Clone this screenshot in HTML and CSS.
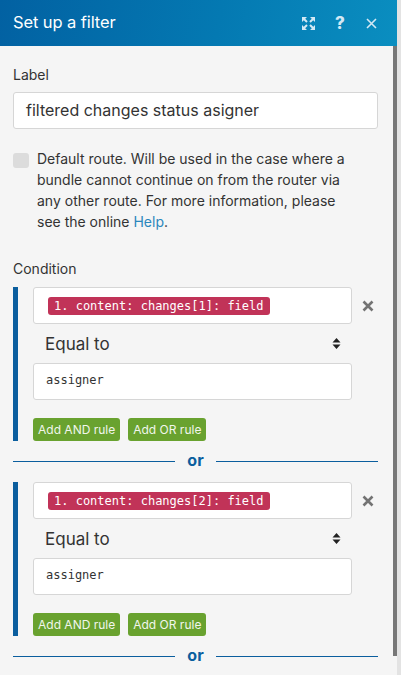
FILE: index.html
```html
<!DOCTYPE html>
<html>
<head>
<meta charset="utf-8">
<link rel="stylesheet" href="styles.css">
</head>
<body>
<div class="panel">
  <div class="header">
    <span class="title">Set up a filter</span>
    <div class="tools">
      <svg class="ico-expand" width="13" height="13" viewBox="0 0 13 13">
        <path d="M0 0H5L0 5Z M13 0H8L13 5Z M0 13H5L0 8Z M13 13H8L13 8Z" fill="currentColor"/>
        <path d="M2 2L5 5M11 2L8 5M2 11L5 8M11 11L8 8" stroke="currentColor" stroke-width="2"/>
      </svg>
      <span class="ico-help">?</span>
      <svg class="ico-close" width="11" height="11" viewBox="0 0 11 11">
        <path d="M1 1L10 10M10 1L1 10" stroke="currentColor" stroke-width="1.6"/>
      </svg>
    </div>
  </div>
  <div class="scroll-row">
    <div class="content">
      <div class="label">Label</div>
      <div class="input">filtered changes status asigner</div>
      <div class="check-row">
        <span class="checkbox"></span>
        <p class="check-text">Default route. Will be used in the case where a bundle cannot continue on from the router via any other route. For more information, please see the online <a class="link">Help</a>.</p>
      </div>
      <div class="label cond-label">Condition</div>

      <div class="cond">
        <div class="field-row">
          <div class="field"><span class="tag">1. content: changes[1]: field</span></div>
          <svg class="del" width="12" height="12" viewBox="0 0 12 12"><path d="M1.5 1.5L10.5 10.5M10.5 1.5L1.5 10.5" stroke="currentColor" stroke-width="2.6"/></svg>
        </div>
        <div class="select"><span>Equal to</span>
          <svg width="9" height="13" viewBox="0 0 9 13"><path d="M0.5 5.5L4.5 1L8.5 5.5Z M0.5 7.5L4.5 12L8.5 7.5Z" fill="currentColor"/></svg>
        </div>
        <div class="value">assigner</div>
        <div class="btns"><span class="btn">Add AND rule</span><span class="btn">Add OR rule</span></div>
      </div>
      <div class="or"><span class="line"></span><span class="or-text">or</span><span class="line"></span></div>

      <div class="cond">
        <div class="field-row">
          <div class="field"><span class="tag">1. content: changes[2]: field</span></div>
          <svg class="del" width="12" height="12" viewBox="0 0 12 12"><path d="M1.5 1.5L10.5 10.5M10.5 1.5L1.5 10.5" stroke="currentColor" stroke-width="2.6"/></svg>
        </div>
        <div class="select"><span>Equal to</span>
          <svg width="9" height="13" viewBox="0 0 9 13"><path d="M0.5 5.5L4.5 1L8.5 5.5Z M0.5 7.5L4.5 12L8.5 7.5Z" fill="currentColor"/></svg>
        </div>
        <div class="value">assigner</div>
        <div class="btns"><span class="btn">Add AND rule</span><span class="btn">Add OR rule</span></div>
      </div>
      <div class="or"><span class="line"></span><span class="or-text">or</span><span class="line"></span></div>
    </div>
    <div class="thumb"></div>
  </div>
</div>
</body>
</html>
```

FILE: styles.css
```css
*, *::before, *::after {
  box-sizing: border-box;
}
html, body {
  margin: 0;
  padding: 0;
}
body {
  width: 401px;
  height: 675px;
  overflow: hidden;
  display: flex;
  background: #e3e3e3;
  font-family: Inter, "Noto Sans", sans-serif;
  color: #333;
}
.panel {
  width: 397px;
  height: 675px;
  flex: none;
  display: flex;
  flex-direction: column;
  overflow: hidden;
  background: #f5f5f5;
}
.header {
  height: 46px;
  flex: none;
  display: flex;
  align-items: center;
  justify-content: space-between;
  padding: 0 20px 0 13px;
  background: linear-gradient(100deg, #0261a2 0%, #0479b2 55%, #0a8ec0 100%);
  color: #fff;
}
.title {
  font-size: 16.5px;
  letter-spacing: -0.1px;
  margin-top: -2px;
}
.tools {
  display: flex;
  align-items: center;
  color: #d3e8f4;
}
.ico-expand {
  margin-right: 20px;
}
.ico-help {
  font-size: 17px;
  font-weight: 800;
  width: 10px;
  margin-right: 21px;
  margin-top: -1px;
}
.scroll-row {
  flex: 1;
  position: relative;
  min-height: 0;
  overflow: hidden;
}
.content {
  width: 393px;
  padding: 19px 15px 0 13px;
}
.thumb {
  position: absolute;
  top: 0;
  right: 0;
  width: 4px;
  height: 610px;
  background-color: #777;
  z-index: 2;
}
.label {
  font-size: 14px;
  line-height: 20px;
}
.input {
  margin-top: 7px;
  height: 37px;
  border: 1px solid #d6d6d6;
  border-radius: 3px;
  background: #fff;
  padding: 0 12px;
  font-size: 16px;
  line-height: 35px;
  color: #333;
}
.check-row {
  display: flex;
  margin-top: 19px;
}
.checkbox {
  width: 16px;
  height: 15px;
  flex: none;
  margin-top: 5px;
  margin-right: 8px;
  background: #dcdcdc;
  border-radius: 3px;
}
.check-text {
  margin: 0;
  width: 315px;
  font-size: 14px;
  line-height: 21px;
}
.link {
  color: #2b87bd;
}
.cond-label {
  margin-top: 27px;
  margin-bottom: 8px;
}
.cond {
  border-left: 5px solid #0b5e9e;
  padding-left: 15px;
}
.field-row {
  display: flex;
  align-items: center;
}
.field {
  width: 319px;
  height: 37px;
  border: 1px solid #d6d6d6;
  border-radius: 3px;
  background: #fff;
  display: flex;
  align-items: center;
  padding-left: 14px;
}
.tag {
  background: #c13358;
  color: #fff;
  border-radius: 3px;
  font-family: "DejaVu Sans Mono", monospace;
  font-size: 12px;
  line-height: 18px;
  height: 18px;
  padding: 0 6px;
}
.del {
  margin-left: 10px;
  color: #737373;
}
.select {
  width: 319px;
  height: 39px;
  display: flex;
  align-items: center;
  justify-content: space-between;
  padding-left: 12px;
  font-size: 17px;
}
.select svg {
  margin-right: 11px;
  color: #222;
}
.value {
  width: 319px;
  height: 37px;
  border: 1px solid #d6d6d6;
  border-radius: 3px;
  background: #fff;
  padding-left: 12px;
  font-family: "DejaVu Sans Mono", monospace;
  font-size: 12px;
  line-height: 33px;
  color: #333;
}
.btns {
  display: flex;
  gap: 8px;
  margin-top: 18px;
}
.btn {
  height: 23px;
  line-height: 23px;
  padding: 0 5px;
  border-radius: 3px;
  background: #69a22f;
  color: #f1f6ec;
  font-size: 12px;
}
.or {
  height: 41px;
  display: flex;
  align-items: center;
  gap: 12px;
}
.line {
  flex: 1;
  height: 1px;
  background: #0b5e9e;
}
.or-text {
  color: #0b5e9e;
  font-weight: 700;
  font-size: 16px;
  line-height: 20px;
  margin-top: -3px;
}
```
